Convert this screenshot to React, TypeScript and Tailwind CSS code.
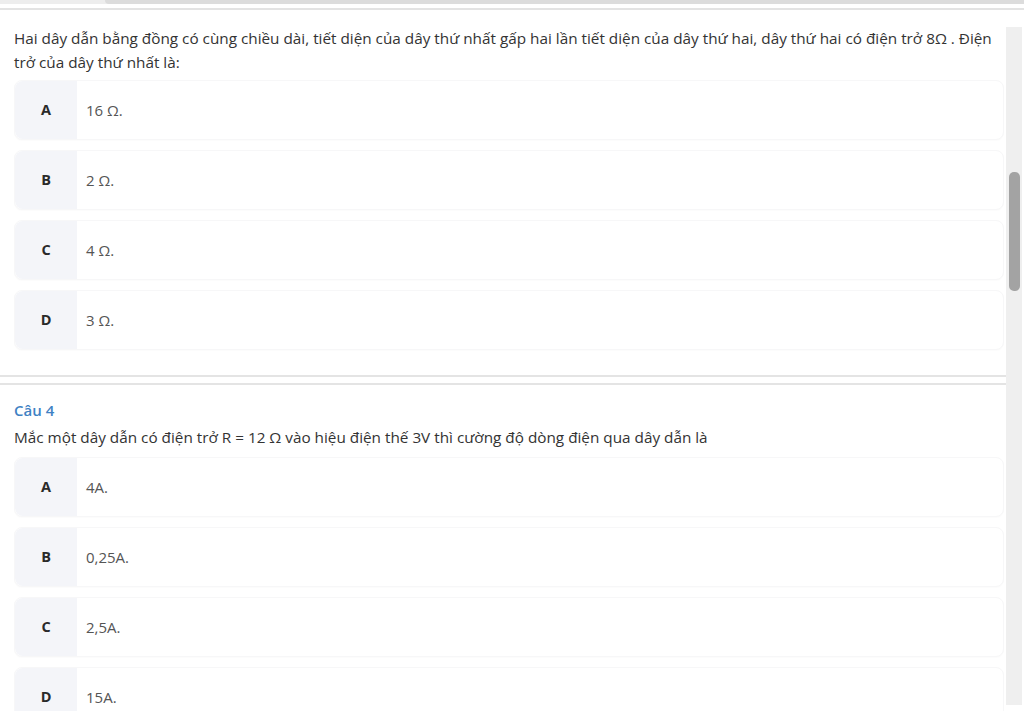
import React from 'react';

interface Option {
  key: string;
  text: string;
}

interface Question {
  title?: string;
  text: string;
  options: Option[];
}

const questions: Question[] = [
  {
    text: 'Hai dây dẫn bằng đồng có cùng chiều dài, tiết diện của dây thứ nhất gấp hai lần tiết diện của dây thứ hai, dây thứ hai có điện trở 8Ω . Điện trở của dây thứ nhất là:',
    options: [
      { key: 'A', text: '16 Ω.' },
      { key: 'B', text: '2 Ω.' },
      { key: 'C', text: '4 Ω.' },
      { key: 'D', text: '3 Ω.' },
    ],
  },
  {
    title: 'Câu 4',
    text: 'Mắc một dây dẫn có điện trở R = 12 Ω vào hiệu điện thế 3V thì cường độ dòng điện qua dây dẫn là',
    options: [
      { key: 'A', text: '4A.' },
      { key: 'B', text: '0,25A.' },
      { key: 'C', text: '2,5A.' },
      { key: 'D', text: '15A.' },
    ],
  },
];

// Single answer row
const OptionRow = ({ option }: { option: Option }) => (
  <div className="flex h-[60px] rounded-lg bg-white border border-[#f7f7f8] shadow-[0_1px_1px_rgba(0,0,0,0.015)] shrink-0">
    <div className="w-[62px] shrink-0 flex items-center justify-center bg-[#f4f5f9] rounded-l-lg text-[14.5px] font-bold text-[#2a2a2a]">
      {option.key}
    </div>
    <div className="flex items-center pl-[9px] text-[15px] text-[#555]">{option.text}</div>
  </div>
);

const QuestionBlock = ({ q }: { q: Question }) => (
  <div className="pl-[14px] pr-[2px]">
    {q.title && <div className="text-[15px] font-semibold text-[#3f82c4] leading-[22px] mt-[14px]">{q.title}</div>}
    <p className={`text-[15.3px] text-[#333] leading-[24px] ${q.title ? 'mt-[4px] mb-[8px]' : 'mb-[6px]'}`}>{q.text}</p>
    <div className="flex flex-col gap-[10px]">
      {q.options.map((o) => (
        <OptionRow key={o.key} option={o} />
      ))}
    </div>
  </div>
);

export default function App() {
  return (
    <div className="h-[711px] w-[1024px] overflow-hidden bg-white flex flex-col" style={{ fontFamily: '"Open Sans", "Noto Sans", sans-serif' }}>
      {/* browser-ish top strip */}
      <div className="h-[4px] bg-[#ededed] flex shrink-0">
        <div className="ml-[105px] flex-1 bg-[#dcdcdc] rounded-bl-[4px]" />
      </div>
      <div className="h-[4px] shrink-0" />
      <div className="h-[2px] bg-[#e3e3e3] shrink-0" />

      <div className="flex flex-1 min-h-0">
        <div className="flex-1 flex flex-col pt-[16px]">
          <QuestionBlock q={questions[0]} />
          <div className="mt-[25px] h-[2px] bg-[#e4e4e4] shrink-0" />
          <div className="mt-[6px] h-[2px] bg-[#e4e4e4] shrink-0" />
          <QuestionBlock q={questions[1]} />
        </div>
        {/* scrollbar */}
        <div className="w-[18px] shrink-0 pt-[17px] pb-[6px] pr-[2px]">
          <div className="h-full bg-[#efefef] flex justify-center pt-[145px]">
            <div className="w-[11px] h-[119px] rounded-[5px] bg-[#a3a3a3]" />
          </div>
        </div>
      </div>
    </div>
  );
}
